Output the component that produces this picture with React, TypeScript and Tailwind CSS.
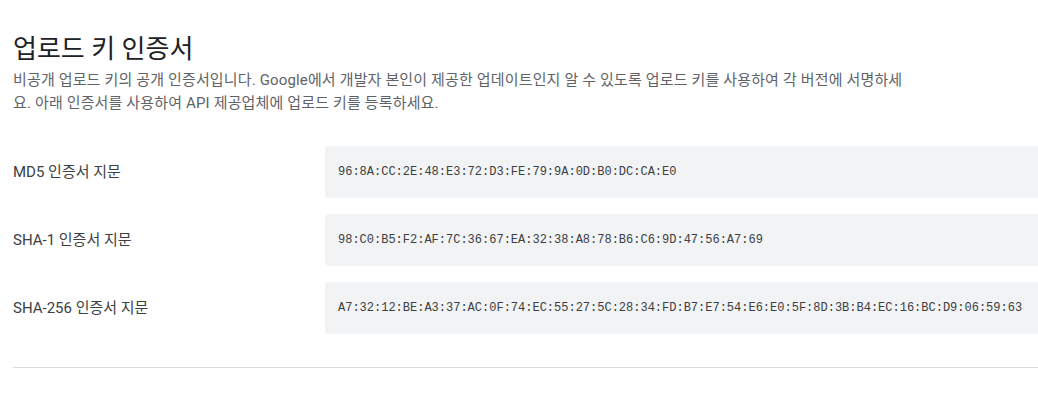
import React from "react";

const rows = [
  { label: "MD5 인증서 지문", value: "96:8A:CC:2E:48:E3:72:D3:FE:79:9A:0D:B0:DC:CA:E0" },
  { label: "SHA-1 인증서 지문", value: "98:C0:B5:F2:AF:7C:36:67:EA:32:38:A8:78:B6:C6:9D:47:56:A7:69" },
  {
    label: "SHA-256 인증서 지문",
    value:
      "A7:32:12:BE:A3:37:AC:0F:74:EC:55:27:5C:28:34:FD:B7:E7:54:E6:E0:5F:8D:3B:B4:EC:16:BC:D9:06:59:63",
  },
];

export default function App() {
  return (
    <div
      className="w-[1038px] h-[404px] bg-white pl-[13px] pt-[31px] overflow-hidden"
      style={{ fontFamily: "Roboto, 'Noto Sans CJK KR', sans-serif" }}
    >
      <h1 className="text-[26px] leading-[36px] text-[#202124] font-normal">업로드 키 인증서</h1>
      <p className="mt-[2px] text-[15px] leading-[23px] text-[#5f6368] tracking-[0.15px]">
        비공개 업로드 키의 공개 인증서입니다. Google에서 개발자 본인이 제공한 업데이트인지 알 수 있도록 업로드 키를 사용하여 각 버전에 서명하세
        <br />
        요. 아래 인증서를 사용하여 API 제공업체에 업로드 키를 등록하세요.
      </p>
      <div className="mt-[31px] flex flex-col gap-[16px]">
        {rows.map((r) => (
          <div key={r.label} className="flex items-center">
            <div className="w-[312px] shrink-0 text-[15px] text-[#3c4043]">{r.label}</div>
            <div
              className="flex-1 h-[52px] flex items-center pl-[13px] bg-[#f1f3f4] rounded-l-[4px] text-[12px] text-[#3c4043] whitespace-nowrap"
              style={{ fontFamily: "'Liberation Mono', monospace" }}
            >
              {r.value}
            </div>
          </div>
        ))}
      </div>
      <div className="mt-[33px] h-px bg-[#dadce0]" />
    </div>
  );
}
